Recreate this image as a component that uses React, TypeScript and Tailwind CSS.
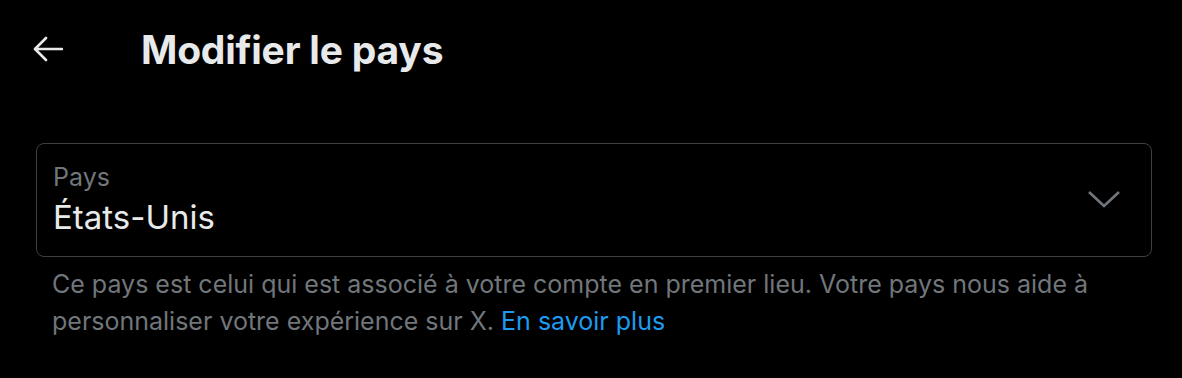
import React from "react";

export default function App() {
  return (
    <div className="w-[1182px] h-[378px] bg-black overflow-hidden" style={{ fontFamily: "Inter, 'Noto Sans', sans-serif" }}>
      <div className="flex items-center h-[98px] pl-[33px]">
        <svg width="30" height="26" viewBox="0 0 30 26" className="shrink-0">
          <path d="M29 13H2.5M13 2L2 13l11 11" fill="none" stroke="#e7e9ea" strokeWidth="2.6" strokeLinecap="round" strokeLinejoin="round" />
        </svg>
        <h1 className="ml-[78px] text-[39px] font-bold text-[#e7e9ea] leading-none tracking-[-0.2px]">Modifier le pays</h1>
      </div>
      <div className="ml-[36px] mr-[30px] mt-[45px]">
        <div className="h-[114px] border border-[#3e4144] rounded-[8px] flex items-center pl-[16px] pr-[30px]">
          <div className="flex-1 flex flex-col">
            <span className="text-[25px] text-[#71767b] leading-[30px]">Pays</span>
            <span className="text-[33px] text-[#e7e9ea] leading-[42px] mt-[4px]">États-Unis</span>
          </div>
          <svg width="34" height="20" viewBox="0 0 34 20" className="mt-[-2px]">
            <path d="M2 3l15 14L32 3" fill="none" stroke="#71767b" strokeWidth="2.6" />
          </svg>
        </div>
        <p className="px-[16px] pt-[9px] text-[25px] leading-[37px] text-[#71767b]">
          Ce pays est celui qui est associé à votre compte en premier lieu. Votre pays nous aide à personnaliser votre expérience sur X. <span className="text-[#1d9bf0]">En savoir plus</span>
        </p>
      </div>
    </div>
  );
}
